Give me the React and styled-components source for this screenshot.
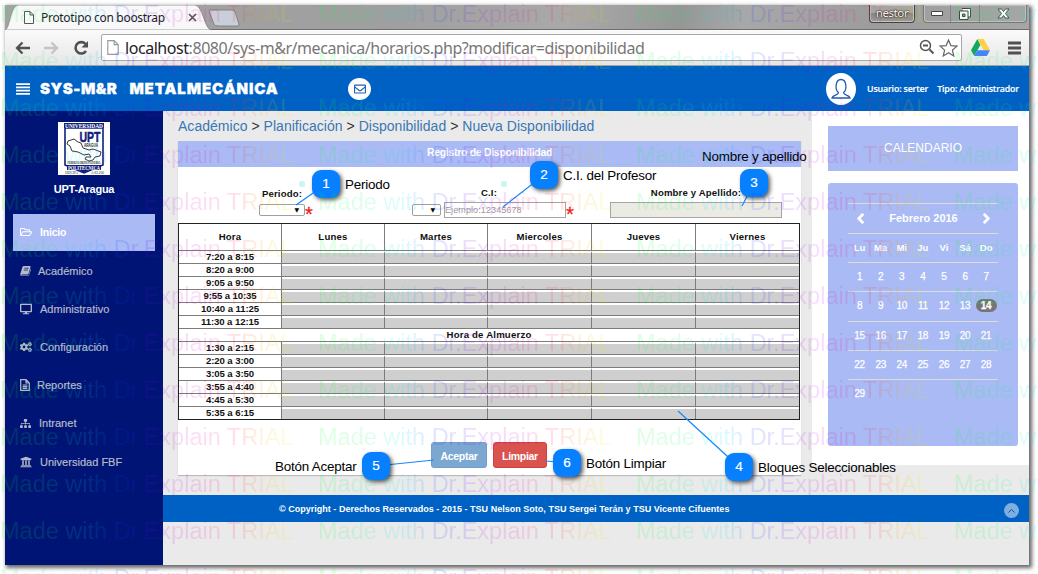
import React from "react";
import styled, { createGlobalStyle } from "styled-components";
import {
  FaRegFolderOpen, FaDesktop, FaCogs, FaSitemap, FaUniversity,
  FaChevronLeft, FaChevronRight, FaRegEnvelope,
} from "react-icons/fa";

const Global = createGlobalStyle`
  * { box-sizing: border-box; }
  body { margin: 0; background: #fff; overflow: hidden; font-family: "Liberation Sans", Arial, sans-serif; }
`;

const Page = styled.div`
  position: relative;
  width: 1038px;
  height: 574px;
  padding: 5px 9px 9px 5px;
  overflow: hidden;
`;
const Window = styled.div`
  width: 1024px;
  height: 560px;
  display: flex;
  flex-direction: column;
  box-shadow: 2px 2px 4px 1px rgba(0, 0, 0, 0.6);
`;

/* Browser chrome */
const TabStrip = styled.div`
  height: 25px;
  display: flex;
  align-items: stretch;
  background: linear-gradient(100deg, #a3a3a3 0%, #9f9f9f 38%, #a9a9a9 55%, #969696 66%, #a8a8a8 72%, #9c9c9c 85%, #a6a6a6 100%);
  border-bottom: 1px solid #6f6f6f;
`;
const TabShape = styled.svg`
  display: block;
  flex: none;
`;
const Tab = styled.div`
  position: relative;
  width: 240px;
  height: 25px;
`;
const TabLabel = styled.div`
  position: absolute;
  left: 19px;
  top: 0;
  width: 173px;
  height: 25px;
  display: flex;
  align-items: center;
  gap: 7px;
  font: 12px/25px "Noto Sans", sans-serif;
  letter-spacing: -0.3px;
  color: #1c1c1c;
`;
const WindowButtons = styled.div`
  margin-left: auto;
  display: flex;
  align-items: flex-start;
  padding-right: 2px;
  gap: 8px;
`;
const UserChip = styled.div`
  width: 46px;
  height: 18px;
  border: 1px solid #444;
  border-top: 0;
  border-radius: 0 0 4px 4px;
  background: linear-gradient(#a5a5a5 45%, #858585 50%, #9a9a9a);
  box-shadow: inset 0 0 0 1px #c4c4c4;
  font: 11.5px/16px "Noto Sans", sans-serif;
  letter-spacing: -0.4px;
  text-align: center;
  color: #fff;
  text-shadow: 0 0 2px #000, 0 0 1px #000;
`;
const Controls = styled.div`
  display: flex;
  height: 18px;
  border: 1px solid #777;
  border-top: 0;
  border-radius: 0 0 4px 4px;
  box-shadow: inset 0 0 0 1px #c0c0c0;
`;
const Control = styled.div`
  width: ${(p) => p.$w}px;
  display: flex;
  align-items: center;
  justify-content: center;
  border-right: ${(p) => (p.$last ? "0" : "1px solid #858585")};
`;
const Toolbar = styled.div`
  height: 36px;
  flex: none;
  display: flex;
  align-items: center;
  padding: 0 8px 0 9px;
  background: linear-gradient(#fafafa, #e6e6e6);
  border-bottom: 1px solid #a5a5a5;
`;
const NavIcons = styled.svg`
  flex: none;
`;
const UrlBar = styled.div`
  display: flex;
  align-items: center;
  width: 861px;
  height: 27px;
  margin-left: 9px;
  padding: 0 3px 0 5px;
  background: #fff;
  border: 1px solid #a8a8a8;
  border-radius: 2px;
`;
const Url = styled.div`
  margin-left: 6px;
  font: 16px/24px "Noto Sans", sans-serif;
  letter-spacing: -0.445px;
  white-space: nowrap;
  color: #777;
  b { font-weight: 400; color: #222; }
`;
const UrlIcons = styled.svg`
  margin-left: auto;
  flex: none;
`;

/* Application */
const Header = styled.header`
  height: 45px;
  flex: none;
  display: flex;
  align-items: center;
  padding: 0 10px 0 11px;
  background: #0061c5;
  color: #fff;
`;
const Brand = styled.div`
  width: 322px;
  margin-left: 10px;
  display: flex;
  gap: 12px;
  margin-right: -14px;
  font: 900 15px/20px Inter, "Liberation Sans", sans-serif;
`;
const BrandWord = styled.span`
  letter-spacing: ${(p) => p.$spacing}px;
  -webkit-text-stroke: 0.3px #fff;
`;
const Round = styled.div`
  width: ${(p) => p.$size}px;
  height: ${(p) => p.$size + (p.$size > 25 ? 2 : -1)}px;
  border-radius: 50%;
  background: #fff;
  color: #1f62ad;
  display: flex;
  align-items: center;
  justify-content: center;
`;
const UserInfo = styled.div`
  margin-left: auto;
  display: flex;
  align-items: center;
  gap: 9px;
  font: 600 8.8px/12px "Open Sans", sans-serif;
  letter-spacing: -0.14px;
  white-space: nowrap;
  -webkit-text-stroke: 0.15px #fff;
  span:nth-child(2) { margin-left: 2px; }
`;
const Body = styled.div`
  flex: 1;
  display: flex;
  min-height: 0;
`;
const Sidebar = styled.aside`
  width: 158px;
  background: #001475;
  display: flex;
  flex-direction: column;
  align-items: center;
  padding-top: 11px;
`;
const School = styled.div`
  margin: 6px 0 0;
  font: bold 11px/16px "Liberation Sans", sans-serif;
  letter-spacing: -0.25px;
  color: #fff;
`;
const Menu = styled.nav`
  width: 142px;
  margin-top: 17px;
  display: flex;
  flex-direction: column;
`;
const MenuItem = styled.a`
  height: ${(p) => (p.$active ? 37 : 38.2)}px;
  margin-bottom: ${(p) => (p.$active ? 1 : 0)}px;
  padding-bottom: 1px;
  display: flex;
  align-items: center;
  padding-left: 7px;
  gap: ${(p) => p.$gap}px;
  font: ${(p) => (p.$active ? "bold 10.5px" : "11px")}/14px "Liberation Sans", sans-serif;
  letter-spacing: ${(p) => (p.$active ? -0.2 : 0.02)}px;
  color: ${(p) => (p.$active ? "#fff" : "#b5bac8")};
  background: ${(p) => (p.$active ? "#a9baf5" : "transparent")};
  -webkit-text-stroke: ${(p) => (p.$active ? 0 : 0.2)}px;
`;
const Main = styled.main`
  flex: 1;
  display: flex;
  flex-direction: column;
  background: #eaeaea;
`;
const Columns = styled.div`
  height: 384px;
  display: flex;
  justify-content: space-between;
  align-items: flex-start;
`;
const Content = styled.section`
  width: 638px;
  padding-left: 15px;
`;
const Breadcrumb = styled.div`
  height: 30px;
  font-size: 14px;
  line-height: 31px;
  letter-spacing: 0.03px;
  white-space: nowrap;
  color: #333;
  a { color: #3a77b5; }
`;
const Panel = styled.div`
  height: 334px;
  background: #fff;
  box-shadow: 0 1px 1px rgba(0, 0, 0, 0.2);
`;
const PanelTitle = styled.div`
  height: 26px;
  background: #a9baf5;
  color: #fff;
  font: bold 10.5px/23px "Liberation Sans", sans-serif;
  letter-spacing: -0.3px;
  text-align: center;
`;
const Form = styled.div`
  height: 56px;
  display: flex;
  padding-top: 18px;
`;
const Field = styled.div`
  width: ${(p) => p.$w}px;
  margin-left: ${(p) => p.$ml}px;
  display: flex;
  flex-direction: column;
  align-items: center;
`;
const Label = styled.label`
  height: 16px;
  margin-left: ${(p) => p.$shift || 0}px;
  font: bold 9.6px/${(p) => p.$lh || 15}px "Liberation Sans", sans-serif;
  letter-spacing: 0.15px;
  white-space: nowrap;
  color: #111;
`;
const HelpDot = styled.i`
  position: absolute;
  left: ${(p) => p.$x}px;
  top: 181px;
  width: 6px;
  height: 6px;
  border-radius: 2px;
  background: #cdf5f3;
`;
const Inputs = styled.div`
  display: flex;
  align-items: center;
  height: 17px;
  width: 100%;
`;
const Select = styled.div`
  width: ${(p) => p.$w}px;
  height: 12px;
  flex: none;
  padding-right: 5px;
  border: 1px solid #a0a0a0;
  border-radius: 2px;
  background: #fff;
  font: 6px/9px "DejaVu Sans", sans-serif;
  text-align: right;
  color: #000;
`;
const Input = styled.div`
  width: ${(p) => p.$w}px;
  height: 16px;
  flex: none;
  margin-left: ${(p) => p.$ml || 0}px;
  border: 1px solid #a5a5a5;
  background: ${(p) => (p.$disabled ? "#ebebe4" : "#fff")};
  color: #9a9a9a;
  font: 9px/14px "Liberation Sans", sans-serif;
  letter-spacing: 0.1px;
`;
const Star = styled.span`
  margin: 9px 0 0 0;
  font: 20px/16px "Liberation Sans", sans-serif;
  -webkit-text-stroke: 0.3px #f01818;
  color: #f01818;
`;

const Schedule = styled.div`
  width: 622px;
  border: 1px solid #222;
  font: bold 9.6px/12px "Liberation Sans", sans-serif;
  letter-spacing: 0.05px;
  text-align: center;
  color: #111;
`;
const ScheduleRow = styled.div`
  display: grid;
  grid-template-columns: ${(p) => (p.$full ? "1fr" : "103px 103px 103px 104px 104px 103px")};
  height: ${(p) => (p.$head ? 27 : p.$last ? 12 : 13)}px;
  line-height: ${(p) => (p.$head ? 26 : 12)}px;
  letter-spacing: ${(p) => (p.$head || p.$full ? 0.2 : -0.1)}px;
  border-bottom: ${(p) => (p.$last ? 0 : 1)}px solid #7c7c7c;
`;
const Cell = styled.div`
  border-right: 1px solid #7c7c7c;
  &:last-child { border-right: 0; }
`;
const Slot = styled(Cell)`
  border-top: 2px solid #fff;
  background: #cfcfcf;
  background-clip: padding-box;
`;
const Actions = styled.div`
  display: flex;
  gap: 6px;
  margin: 22px 0 0 253px;
`;
const Button = styled.button`
  width: ${(p) => p.$w}px;
  height: 26px;
  padding: 1px 0 0;
  border: 1px solid ${(p) => (p.$danger ? "#d43f3a" : "#719fc9")};
  border-radius: 3px;
  background: ${(p) => (p.$danger ? "#d9534f" : "#7ba7d0")};
  color: #fff;
  font: bold 10.5px/22px "Liberation Sans", sans-serif;
  letter-spacing: -0.3px;
`;

const Aside = styled.aside`
  width: 217px;
  height: 354px;
  padding: 15px 11px 0 16px;
  background: #fff;
`;
const AsideTitle = styled.div`
  height: 45px;
  background: #a9baf5;
  color: #fff;
  font-size: 12px;
  line-height: 44px;
  text-align: center;
`;
const Calendar = styled.div`
  height: 263px;
  margin-top: 12px;
  padding: 20px 20px 0;
  border-radius: 3px;
  background: #a9baf5;
  color: #fff;
`;
const Month = styled.div`
  height: 30px;
  display: flex;
  align-items: center;
  justify-content: space-between;
  padding: 0 6px 1px 7px;
  border-top: 1px solid #dcdcdc;
  font: bold 11px/14px "Liberation Sans", sans-serif;
  svg { stroke: #fff; stroke-width: 50px; }
`;
const Week = styled.div`
  height: ${(p) => p.$h}px;
  display: grid;
  grid-template-columns: repeat(7, 21.1px);
  padding: 0 0 2px 1px;
  align-items: center;
  border-top: 1px solid #dcdcdc;
  font: ${(p) => (p.$head ? "bold 9.5px" : "10px")}/13px "Liberation Sans", sans-serif;
  letter-spacing: ${(p) => (p.$head ? 0 : -0.3)}px;
  -webkit-text-stroke: ${(p) => (p.$head ? 0 : 0.25)}px #fff;
  text-align: center;
`;
const Day = styled.span`
  font-weight: ${(p) => (p.$today ? "bold" : "inherit")};
  background: ${(p) => (p.$today ? "#757575" : "none")};
  border-radius: 7px;
`;
const Footer = styled.footer`
  height: 27px;
  display: flex;
  align-items: center;
  padding: 0 10px 0 116px;
  background: #0061c5;
  color: #fff;
  font: bold 9px/12px "Liberation Sans", sans-serif;
  letter-spacing: 0.02px;
  justify-content: space-between;
`;
const ToTop = styled.div`
  width: 15px;
  height: 15px;
  margin-top: 4px;
  border-radius: 50%;
  background: #7daee0;
  display: flex;
  align-items: center;
  justify-content: center;
`;

/* Numbered callouts that lie over the page */
const Leaders = styled.svg`
  position: absolute;
  left: 0;
  top: 0;
`;
const Badge = styled.div`
  position: absolute;
  left: ${(p) => p.$x}px;
  top: ${(p) => p.$y}px;
  width: 28px;
  height: 28px;
  border-radius: 9px;
  background: #0680ff;
  box-shadow: 2px 2px 4px rgba(0, 0, 0, 0.65);
  color: #fff;
  font: 13.5px/28px "Liberation Sans", sans-serif;
  -webkit-text-stroke: 0.2px #fff;
  text-align: center;
`;
const Caption = styled.div`
  position: absolute;
  left: ${(p) => p.$x}px;
  top: ${(p) => p.$y}px;
  font: 13.4px/16px "Liberation Sans", sans-serif;
  letter-spacing: -0.2px;
  white-space: nowrap;
  color: #000;
`;

/* Trial watermark */
const Watermark = styled.div`
  position: absolute;
  left: 0;
  top: -4px;
  width: 1290px;
  opacity: 0.13;
  pointer-events: none;
`;
const MarkRow = styled.div`
  display: flex;
  height: 47px;
`;
const Mark = styled.span`
  width: 318px;
  flex: none;
  font: 23.5px/37px "Liberation Sans", sans-serif;
  white-space: nowrap;
  color: transparent;
  background: linear-gradient(90deg, #00ff20 0, #00ff60 40px, #00e0ff 85px, #0050ff 115px, #5000ff 140px, #d000e0 180px, #ff0080 220px, #ff2020 240px, #ffa000 262px, #e8f000 285px, #60ff00 318px);
  -webkit-background-clip: text;
  background-clip: text;
`;

const BookIcon = ({ size }) => (
  <svg width={size} height={size} viewBox="0 0 12 12" fill="currentColor">
    <path d="M4.200 1h6.600q1 .2.700 1.200L9.300 9.500q-.3.900-1.200.9H2q-.7 0-.6.500.1.500.8.500h6.400q.8 0 1-.8l2-6.600q.5.500.3 1.200L10 10.900q-.4 1.100-1.500 1.100H2Q.2 11.700.3 9.800L2.700 2.200Q3.100 1 4.200 1z" />
    <path d="M4.800 3.500h4.500M4.200 5.500h4.500" stroke="#001475" strokeWidth=".8" />
  </svg>
);
const ReportIcon = ({ size }) => (
  <svg width={size} height={size + 2} viewBox="0 0 10 12" fill="none" stroke="currentColor" strokeWidth="1.200">
    <path d="M.7.700h5.300l3.300 3.300v7.300H.7zM6 .7V4h3.300M2.700 6h4.600M2.700 7.700h4.600M2.700 9.400h4.600" />
  </svg>
);

const menu = [
  [FaRegFolderOpen, "Inicio", 8, 12],
  [BookIcon, "Académico", 7, 11],
  [FaDesktop, "Administrativo", 8, 12],
  [FaCogs, "Configuración", 8, 12],
  [ReportIcon, "Reportes", 7, 10],
  [FaSitemap, "Intranet", 8, 11],
  [FaUniversity, "Universidad FBF", 8, 12],
];
const morning = ["7:20 a 8:15", "8:20 a 9:00", "9:05 a 9:50", "9:55 a 10:35", "10:40 a 11:25", "11:30 a 12:15"];
const afternoon = ["1:30 a 2:15", "2:20 a 3:00", "3:05 a 3:50", "3:55 a 4:40", "4:45 a 5:30", "5:35 a 6:15"];
const weeks = [
  { h: 29, d: [1, 2, 3, 4, 5, 6, 7] },
  { h: 30, d: [8, 9, 10, 11, 12, 13, 14] },
  { h: 29, d: [15, 16, 17, 18, 19, 20, 21] },
  { h: 29, d: [22, 23, 24, 25, 26, 27, 28] },
  { h: 29, d: [29] },
];
const badges = [[312, 170], [530, 161], [740, 169], [725, 453], [362, 452], [553, 449]];

const PageIcon = ({ w, h, c }) => (
  <svg width={w} height={h} viewBox="0 0 10 13" fill="#fff" stroke={c} strokeWidth="1">
    <path d="M.5.5h5.500l3.500 3.500v8.500H.5zM6 .5V4h3.500" />
  </svg>
);

const Logo = () => (
  <svg width="52" height="53" viewBox="0 0 52 53">
    <path fill="#fff" d="M0 0h52v53H0z" />
    <path fill="#fff" stroke="#10207c" strokeWidth="1.600" d="M7 6v37l19 8 19-8V6z" />
    <path fill="#10207c" d="M6 1h40v5H6zM9 43h34v5H31l-5 3-5-3H9z" />
    <text x="26" y="5.500" fontFamily="Liberation Serif" fontWeight="bold" fontSize="6" fill="#fff" textAnchor="middle" textLength="38" lengthAdjust="spacingAndGlyphs">UNIVERSIDAD</text>
    <text x="32" y="19.500" fontFamily="Liberation Sans" fontWeight="bold" fontSize="15.500" fill="#10207c" stroke="#10207c" strokeWidth=".5" textAnchor="middle" textLength="21" lengthAdjust="spacingAndGlyphs">UPT</text>
    <text x="33" y="25" fontFamily="Liberation Sans" fontWeight="bold" fontSize="4.500" fill="#222" textAnchor="middle" textLength="14" lengthAdjust="spacingAndGlyphs">ARAGUA</text>
    <path fill="none" stroke="#222" strokeWidth=".9" d="M10 19l6-2 4 3 3 1 2 5 6 2 4-1 8 3-1 4-5 1-2 3-4 1-4-2 1-2h5l-2-3-5 1-6-3-6-1-2-5-3-2z" />
    <text x="26" y="42" fontFamily="Liberation Serif" fontWeight="bold" fontSize="3.800" fill="#111" textAnchor="middle" textLength="33" lengthAdjust="spacingAndGlyphs">FEDERICO BRITO FIGUEROA</text>
    <text x="26" y="47.700" fontFamily="Liberation Serif" fontWeight="bold" fontSize="5.500" fill="#fff" textAnchor="middle" textLength="32" lengthAdjust="spacingAndGlyphs">POLITECNICA</text>
    <text x="7" y="52" fontFamily="Liberation Serif" fontSize="4" fill="#222" textLength="13" lengthAdjust="spacingAndGlyphs">UBICJPA</text>
    <text x="33" y="52" fontFamily="Liberation Serif" fontSize="4" fill="#222" textLength="13" lengthAdjust="spacingAndGlyphs">A-83.200</text>
  </svg>
);

const Row = ({ time, last }) => (
  <ScheduleRow $last={last}>
    <Cell>{time}</Cell>
    {[0, 1, 2, 3, 4].map((i) => <Slot key={i} />)}
  </ScheduleRow>
);

export default function App() {
  return (
    <Page>
      <Global />
      <Window>
        <TabStrip>
          <Tab>
            <TabShape width="240" height="25" viewBox="0 0 240 25">
              <path d="M0 25C5 24 5 1 13 0H190C198 1 199 23 206 25z" fill="#f8f8f8" stroke="#888" strokeWidth=".8" />
              <path d="M204 6q0-1 2-1h20q3 0 4 2l4 12q1 2-2 2h-19q-3 0-4-2z" fill="#c8cfd8" stroke="#777" strokeWidth=".8" />
            </TabShape>
            <TabLabel>
              <PageIcon w="10" h="13" c="#555" />
              Prototipo con boostrap
              <svg width="9" height="9" viewBox="0 0 9 9" stroke="#555" strokeWidth="1.600" style={{ marginLeft: "auto" }}>
                <path d="M1 1l7 7M8 1L1 8" />
              </svg>
            </TabLabel>
          </Tab>
          <WindowButtons>
            <UserChip>nestor</UserChip>
            <Controls>
              <Control $w={27}>
                <svg width="12" height="5"><path d="M.5.5h11v4H.5z" fill="#fff" stroke="#444" /></svg>
              </Control>
              <Control $w={29}>
                <svg width="12" height="12" fill="none" stroke="#444"><path d="M3 .5h8.500V9H9M.5 3H9v8.500H.5z" fill="#fff" /><path d="M3.500 6h2.500v2.500H3.500z" fill="#999" /></svg>
              </Control>
              <Control $w={46} $last>
                <svg width="13" height="11" viewBox="0 0 13 11"><path d="M1 1h3.500l2 2.500L8.500 1H12L8.500 5.500 12 10H8.500l-2-2.500-2 2.500H1l3.500-4.500z" fill="#fff" stroke="#444" strokeWidth=".9" /></svg>
              </Control>
            </Controls>
          </WindowButtons>
        </TabStrip>
        <Toolbar>
          <NavIcons width="78" height="18" viewBox="0 0 78 18" fill="none" strokeWidth="2.300">
            <path d="M16 9H3M8.500 3.500L3 9l5.500 5.500" stroke="#505050" />
            <path d="M30 9h13M37.500 3.500L43 9l-5.500 5.500" stroke="#c4c4c4" />
            <path d="M71.500 5A5.700 5.700 0 1 0 72 12" stroke="#505050" strokeWidth="2.600" />
            <path d="M74 2v6.500h-6.500z" fill="#505050" />
          </NavIcons>
          <UrlBar>
            <PageIcon w="12" h="15" c="#999" />
            <Url><b>localhost</b>:8080/sys-m&amp;r/mecanica/horarios.php?modificar=disponibilidad</Url>
            <UrlIcons width="39" height="20" viewBox="0 0 39 20" fill="none">
              <circle cx="6.500" cy="7.500" r="5" stroke="#555" strokeWidth="1.500" />
              <path d="M4 7.500h5M10.500 11.500l4 4" stroke="#555" strokeWidth="1.900" />
              <path d="M29.500 2l2.400 5.600 6 .5-4.500 4 1.400 5.900-5.300-3.200-5.300 3.200 1.400-5.900-4.500-4 6-.5z" stroke="#666" strokeWidth="1.200" />
            </UrlIcons>
          </UrlBar>
          <svg width="19" height="17" viewBox="0 0 18 16" style={{ marginLeft: 9 }}>
            <path fill="#11a861" d="M6 0L0 10.500 3 16l6-10.500z" />
            <path fill="#ffcf48" d="M6 0h6l6 10.500h-6z" />
            <path fill="#4285f4" d="M6 10.500h12L15 16H3z" />
          </svg>
          <svg width="13" height="14" style={{ marginLeft: "auto" }}>
            <path d="M0 2h13M0 7h13M0 12h13" stroke="#505050" strokeWidth="2.800" />
          </svg>
        </Toolbar>
        <Header>
          <svg width="14" height="12"><path d="M0 1.200h14M0 4.400h14M0 7.600h14M0 10.800h14" stroke="#fff" strokeWidth="1.700" /></svg>
          <Brand>
            <BrandWord $spacing={0.55}>SYS-M&amp;R</BrandWord>
            <BrandWord $spacing={0.9}>METALMECÁNICA</BrandWord>
          </Brand>
          <Round $size={23}><FaRegEnvelope size={12} /></Round>
          <UserInfo>
            <Round $size={30}>
              <svg width="20" height="22" viewBox="0 0 20 22" fill="none" stroke="#1f5fae" strokeWidth="1.300">
                <path d="M7.500 14.500C4 12 4 1.500 10 1.500s6 10.500 2.500 13c0 3 6 2 6.500 5.500H1c.5-3.500 6.500-2.500 6.500-5.500z" />
              </svg>
            </Round>
            <span>Usuario: serter</span>
            <span>Tipo: Administrador</span>
          </UserInfo>
        </Header>
        <Body>
          <Sidebar>
            <Logo />
            <School>UPT-Aragua</School>
            <Menu>
              {menu.map(([Icon, label, gap, size], i) => (
                <MenuItem key={label} $active={i === 0} $gap={gap}>
                  <Icon size={size} />
                  {label}
                </MenuItem>
              ))}
            </Menu>
          </Sidebar>
          <Main>
            <Columns>
              <Content>
                <Breadcrumb>
                  <a>Académico</a> &gt; <a>Planificación</a> &gt; <a>Disponibilidad</a> &gt; <a>Nueva Disponibilidad</a>
                </Breadcrumb>
                <Panel>
                  <PanelTitle>Registro de Disponibilidad</PanelTitle>
                  <Form>
                    <Field $w={58} $ml={81}>
                      <Label $shift={-12} $lh={17}>Periodo:</Label>
                      <Inputs><Select $w={46}>▼</Select><Star>*</Star></Inputs>
                    </Field>
                    <Field $w={164} $ml={95}>
                      <Label $shift={-10}>C.I:</Label>
                      <Inputs>
                        <Select $w={29}>▼</Select>
                        <Input $w={122} $ml={3}>Ejemplo:12345678</Input>
                        <Star>*</Star>
                      </Inputs>
                    </Field>
                    <Field $w={172} $ml={34}>
                      <Label>Nombre y Apellido:</Label>
                      <Inputs><Input $w={172} $disabled /></Inputs>
                    </Field>
                  </Form>
                  <Schedule>
                    <ScheduleRow $head>
                      {["Hora", "Lunes", "Martes", "Miercoles", "Jueves", "Viernes"].map((d) => <Cell key={d}>{d}</Cell>)}
                    </ScheduleRow>
                    {morning.map((t) => <Row key={t} time={t} />)}
                    <ScheduleRow $full><Cell>Hora de Almuerzo</Cell></ScheduleRow>
                    {afternoon.map((t, i) => <Row key={t} time={t} last={i === 5} />)}
                  </Schedule>
                  <Actions>
                    <Button $w={56}>Aceptar</Button>
                    <Button $w={54} $danger>Limpiar</Button>
                  </Actions>
                </Panel>
              </Content>
              <Aside>
                <AsideTitle>CALENDARIO</AsideTitle>
                <Calendar>
                  <Month><FaChevronLeft size={11} />Febrero 2016<FaChevronRight size={11} /></Month>
                  <Week $h={29} $head>
                    {["Lu", "Ma", "Mi", "Ju", "Vi", "Sá", "Do"].map((d) => <span key={d}>{d}</span>)}
                  </Week>
                  {weeks.map((w) => (
                    <Week key={w.d[0]} $h={w.h}>
                      {w.d.map((d) => <Day key={d} $today={d === 14}>{d}</Day>)}
                    </Week>
                  ))}
                </Calendar>
              </Aside>
            </Columns>
            <Footer>
              © Copyright - Derechos Reservados - 2015 - TSU Nelson Soto, TSU Sergei Terán y TSU Vicente Cifuentes
              <ToTop><svg width="7" height="4" fill="none" stroke="#1d4f86"><path d="M.5 3.500l3-3 3 3" /></svg></ToTop>
            </Footer>
          </Main>
        </Body>
      </Window>

      <HelpDot $x={299} />
      <HelpDot $x={501} />
      <Leaders width="1038" height="574" stroke="#1586ff" strokeWidth="1.200">
        <path d="M296 205L326 184M503 207L544 175M742 206L754 183M678 411L739 467M434 460L376 466M546 461L567 463" />
      </Leaders>
      {badges.map(([x, y], i) => <Badge key={i} $x={x} $y={y}>{i + 1}</Badge>)}
      <Caption $x={345} $y={177}>Periodo</Caption>
      <Caption $x={563} $y={168}>C.I. del Profesor</Caption>
      <Caption $x={702} $y={149}>Nombre y apellido</Caption>
      <Caption $x={758} $y={460}>Bloques Seleccionables</Caption>
      <Caption $x={275} $y={459}>Botón Aceptar</Caption>
      <Caption $x={586} $y={456}>Botón Limpiar</Caption>

      <Watermark>
        {Array.from({ length: 13 }, (_, r) => (
          <MarkRow key={r}>
            {[0, 1, 2, 3].map((c) => <Mark key={c}>Made with Dr.Explain TRIAL</Mark>)}
          </MarkRow>
        ))}
      </Watermark>
    </Page>
  );
}
